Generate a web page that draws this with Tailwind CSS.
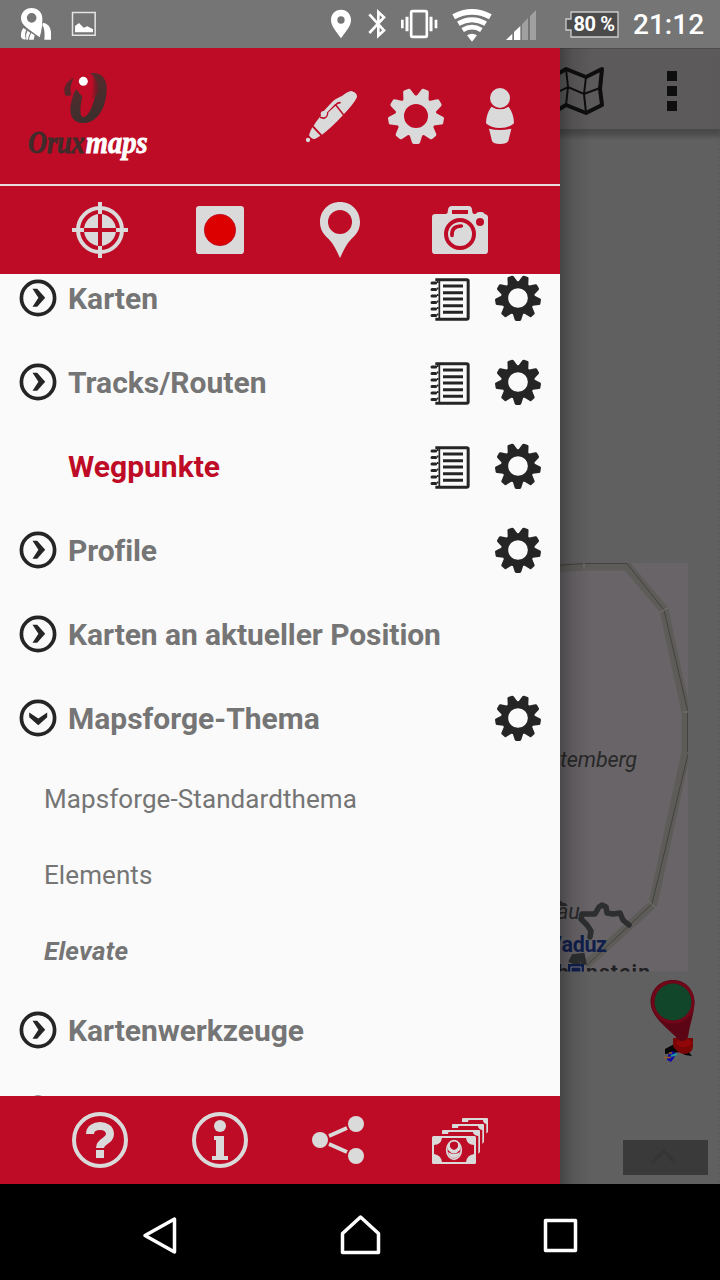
<!DOCTYPE html>
<html lang="de">
<head>
<meta charset="utf-8">
<title>OruxMaps</title>
<script src="https://cdn.jsdelivr.net/npm/@tailwindcss/browser@4"></script>
</head>
<body class="w-[720px] h-[1280px] overflow-hidden flex flex-col bg-black font-['Roboto',sans-serif]">

<!-- shared icons -->
<svg class="hidden">
  <defs>
    <path id="tooth" d="M-7 17 L-4 26.6 Q-3.500 28 -2.4 28 H2.4 Q3.500 28 4 26.6 L7 17Z"/>
    <symbol id="gear" viewBox="-28 -28 56 56">
      <circle r="16.2" fill="none" stroke="currentColor" stroke-width="8.4"/>
      <g fill="currentColor">
        <use href="#tooth"/><use href="#tooth" transform="rotate(40)"/><use href="#tooth" transform="rotate(80)"/>
        <use href="#tooth" transform="rotate(120)"/><use href="#tooth" transform="rotate(160)"/><use href="#tooth" transform="rotate(200)"/>
        <use href="#tooth" transform="rotate(240)"/><use href="#tooth" transform="rotate(280)"/><use href="#tooth" transform="rotate(320)"/>
      </g>
    </symbol>
    <symbol id="chev" viewBox="0 0 38 38">
      <circle cx="19" cy="19" r="16.6" fill="none" stroke="#252525" stroke-width="3.700"/>
      <path d="M13.5 9.8H18.2L26.2 18.7L18.2 27.8H13.5L19.4 18.7Z" fill="#252525"/>
    </symbol>
    <symbol id="book" viewBox="30 22 120 132">
      <path d="M46 30H140Q144.500 30 144.500 34V144Q144.500 148.500 140 148.500H46" fill="none" stroke="#252525" stroke-width="9"/>
      <path d="M58 30V149" stroke="#252525" stroke-width="5"/>
      <path d="M53 34V149" stroke="#252525" stroke-width="5" stroke-dasharray="6 13.5"/>
      <path d="M36 40H47M36 59.500H47M36 79H47M36 98.500H47M36 118H47M36 137.500H47" stroke="#252525" stroke-width="9" stroke-linecap="round"/>
      <path d="M69 49H129M69 69H129M69 88H129M69 108H129M69 127.500H129" stroke="#252525" stroke-width="9"/>
    </symbol>
  </defs>
</svg>

<!-- status bar -->
<header class="h-12 shrink-0 bg-[#757575] flex items-center text-white">
  <svg class="w-[110px] h-12" viewBox="0 0 330 144" fill="#fff">
    <path d="M95 24C76 24 63 37 63 55C63 76 84 86 119 112C126 90 127 72 127 55C127 37 113 24 95 24ZM95 39A14.500 14.500 0 1 1 95 68A14.500 14.500 0 1 1 95 39Z" fill-rule="evenodd"/>
    <path d="M70 84L79 90Q72 102 78 118Q66 120 63 110Q62 94 70 84ZM82 92L91 98Q84 108 84 119H79Q76 104 82 92ZM94 99L104 106L101 119H87Q88 107 94 99ZM129 68Q151 72 153 95V119H133Q136 88 127 76Z"/>
    <path d="M217.500 37.500H285.500V105.500H217.500Z" fill="none" stroke="#e4e4e4" stroke-width="4.500"/>
    <path d="M225 97V78L237 69L251 83L262 79L279 88V97Z"/>
  </svg>
  <svg class="ml-[210px] w-[225px] h-12" viewBox="0 0 675 144" fill="#fff">
    <path d="M63 29C45 29 33 43 33 60C33 80 52 98 63 115C74 98 93 80 93 60C93 43 81 29 63 29ZM63 49A11 11 0 1 1 63 71A11 11 0 1 1 63 49Z" fill-rule="evenodd"/>
    <path d="M148 43L192 91L175 107V36L192 52L148 99" fill="none" stroke="#fff" stroke-width="8"/>
    <rect x="273.500" y="33.500" width="47" height="77" rx="4" fill="none" stroke="#fff" stroke-width="8"/>
    <path d="M261 50V94M333 50V94" stroke="#fff" stroke-width="9"/><path d="M247 59V85M348 59V85" stroke="#fff" stroke-width="8"/>
    <g fill="none" stroke="#fff">
      <path d="M401 50Q456 21 511 50" stroke-width="17"/>
      <path d="M415 71Q456 47 497 71" stroke-width="15"/>
      <path d="M428 90Q456 73 484 90" stroke-width="14"/>
    </g>
    <path d="M441 106Q456 97 471 106L456 125Z"/>
    <path d="M558 120L577 101V120ZM582 96L601 78V120H582Z"/>
    <path d="M606 73L624 54V120H606ZM630 48L648 30V120H630Z" fill="#a0a0a0"/>
  </svg>
  <div class="ml-[20px] w-[54px] h-[27px] relative">
    <svg class="absolute inset-0 w-[54px] h-[27px]" viewBox="0 0 54 27"><path d="M6 1H53V26H6V19H1V8H6Z" fill="#4b4b4b" stroke="#ccc" stroke-width="1.300"/></svg>
    <span class="absolute left-[8.500px] top-0 leading-[27px] text-[20px] font-bold whitespace-nowrap tracking-[-0.4px]">80 %</span>
  </div>
  <span class="ml-[14px] text-[28px] font-medium leading-12 pt-0.5">21:12</span>
</header>

<main class="h-[1136px] shrink-0 flex">
  <!-- drawer -->
  <aside class="w-[560px] h-full flex flex-col bg-[#fafafa] text-[#dadada]">
    <div class="h-[138px] shrink-0 bg-[#be0b26] border-b-2 border-[#e8dcdc] flex items-center pl-6 pr-8">
      <svg class="w-[130px] h-[100px]" viewBox="72 198 390 300">
        <defs><linearGradient id="og" x1="0" y1="0" x2="0.3" y2="1"><stop offset="0" stop-color="#5c2a2c"/><stop offset="1" stop-color="#3c2f2d"/></linearGradient>
        <linearGradient id="os" x1="1" y1="0" x2="0" y2="0"><stop offset="0" stop-color="#5a2227"/><stop offset="1" stop-color="#be0b26"/></linearGradient></defs>
        <path d="M221 233Q196 246 193 268Q192 284 200 289L214 285Q206 262 221 233Z" fill="#57282b"/>
        <path d="M228 267L247 290C238 330 240 351 250 351C266 351 282 312 288 272C290 244 284 228 270 220C302 214 320 234 320 266C319 330 288 369 250 369C214 369 206 338 214 305Q219 282 228 267Z" fill="url(#og)"/>
        <path d="M278 228Q304 252 292 282L271 304Q284 262 278 228Z" fill="url(#os)"/>
        <circle cx="250" cy="244" r="13.500" fill="#fff"/>
        <g font-family="Liberation Serif" font-weight="bold" font-style="italic" font-size="97" stroke-width="2.500">
          <text x="84" y="458" textLength="170" lengthAdjust="spacingAndGlyphs" fill="#3f2c2b" stroke="#3f2c2b">Orux</text>
          <text x="257" y="458" textLength="186" lengthAdjust="spacingAndGlyphs" fill="#fff" stroke="#fff">maps</text>
        </g>
      </svg>
      <div class="ml-auto flex gap-7">
        <svg class="size-14" viewBox="42 54 168 168" fill="currentColor">
          <circle cx="54" cy="210" r="6.500"/>
          <path d="M67 172L91 197Q80 204 74 207Q64 208 57 196Q60 184 67 172Z"/>
          <path d="M71 167C80 152 88 142 95 134L130 98Q146 80 156 78Q172 64 184 63Q202 67 201 82Q190 104 160 134Q125 172 96 194Z"/>
          <path d="M138 106L161 135M152 98Q144 97 137 104L113 126Q114 139 102 145L90 142" fill="none" stroke="#be0b26" stroke-width="4.500"/>
          <path d="M101 131L123 107Q135 91 150 87" fill="none" stroke="currentColor" stroke-width="10" stroke-linecap="round"/>
          <circle cx="101" cy="132" r="9"/>
        </svg>
        <svg class="size-14"><use href="#gear"/></svg>
        <svg class="size-14" viewBox="546 54 168 168" fill="currentColor">
          <circle cx="630" cy="84" r="30"/>
          <path d="M604 110Q630 126 656 110Q672 133 672 160Q658 174 630 174Q602 174 588 160Q588 133 604 110Z"/>
          <path d="M597 176Q630 184 664 176L655 213Q650 222 630 222Q610 222 606 213Z"/>
        </svg>
      </div>
    </div>
    <div class="h-[88px] shrink-0 bg-[#be0b26] flex items-center gap-16 pl-[72px]">
      <svg class="size-14" viewBox="66 66 168 168" fill="currentColor">
        <circle cx="150" cy="150" r="66" fill="none" stroke="currentColor" stroke-width="12"/><circle cx="150" cy="150" r="48"/>
        <path d="M150 102V198M102 150H198" stroke="#be0b26" stroke-width="12"/>
        <path d="M150 66V102M150 198V234M66 150H102M198 150H234" stroke="currentColor" stroke-width="12"/>
      </svg>
      <svg class="size-14" viewBox="426 66 168 168"><rect x="438" y="78" width="144" height="144" rx="10" fill="currentColor"/><circle cx="510" cy="150" r="47" fill="#dc0000" stroke="#b8142a" stroke-width="2.500"/></svg>
      <svg class="size-14" viewBox="66 66 168 168" fill="currentColor"><path d="M150 66C116 66 90 92 90 126C90 150 101 163 116 177C133 194 140 214 150 234C160 214 167 194 184 177C199 163 210 150 210 126C210 92 184 66 150 66ZM150 90A36 36 0 1 1 150 162A36 36 0 1 1 150 90Z" fill-rule="evenodd"/></svg>
      <svg class="size-14" viewBox="426 66 168 168" fill="currentColor">
        <path d="M436 102H468Q474 100 474 90Q475 78 486 78H536Q546 79 546 90Q546 100 552 102H557Q560 96 568 96H576Q582 97 584 102Q594 104 594 112V212Q594 222 584 222H436Q426 222 426 212V112Q426 102 436 102Z"/>
        <g fill="#be0b26"><rect x="486" y="90" width="48" height="12"/><circle cx="570" cy="126" r="12"/></g>
        <circle cx="510" cy="162" r="42" fill="none" stroke="#be0b26" stroke-width="12"/>
        <path d="M486 166Q484 138 514 138" fill="none" stroke="#be0b26" stroke-width="11" stroke-linecap="round"/>
      </svg>
    </div>

    <nav class="flex-1 min-h-0 overflow-hidden text-[30px] font-bold text-[#757575]">
      <div class="-mt-[18px] h-[84px] flex items-center px-[19px]"><svg class="size-[38px] mr-[11px]"><use href="#chev"/></svg><span>Karten</span><svg class="ml-auto w-10 h-11 mr-[25px] mt-0.5"><use href="#book"/></svg><svg class="size-[46px] text-[#252525]"><use href="#gear"/></svg></div>
      <div class="h-[84px] flex items-center px-[19px]"><svg class="size-[38px] mr-[11px]"><use href="#chev"/></svg><span>Tracks/Routen</span><svg class="ml-auto w-10 h-11 mr-[25px] mt-0.5"><use href="#book"/></svg><svg class="size-[46px] text-[#252525]"><use href="#gear"/></svg></div>
      <div class="h-[84px] flex items-center pl-[68px] pr-[19px]"><span class="text-[#be0b26]">Wegpunkte</span><svg class="ml-auto w-10 h-11 mr-[25px] mt-0.5"><use href="#book"/></svg><svg class="size-[46px] text-[#252525]"><use href="#gear"/></svg></div>
      <div class="h-[84px] flex items-center px-[19px]"><svg class="size-[38px] mr-[11px]"><use href="#chev"/></svg><span class="tracking-[-0.1px]">Profile</span><svg class="ml-auto size-[46px] text-[#252525]"><use href="#gear"/></svg></div>
      <div class="h-[84px] flex items-center pl-[19px]"><svg class="size-[38px] mr-[11px]"><use href="#chev"/></svg><span class="tracking-[-0.07px]">Karten an aktueller Position</span></div>
      <div class="h-[84px] flex items-center px-[19px]"><svg class="size-[38px] mr-[11px] rotate-90"><use href="#chev"/></svg><span>Mapsforge-Thema</span><svg class="ml-auto size-[46px] text-[#252525]"><use href="#gear"/></svg></div>
      <div class="h-[76px] flex items-center pl-11 pt-0.5 text-[26px] font-normal tracking-[0.09px]">Mapsforge-Standardthema</div>
      <div class="h-[76px] flex items-center pl-11 pt-0.5 text-[26px] font-normal tracking-[0.09px]">Elements</div>
      <div class="h-[76px] flex items-center pl-11 pt-0.5 text-[26px] italic tracking-[0.25px]">Elevate</div>
      <div class="h-[84px] flex items-center pl-[19px]"><svg class="size-[38px] mr-[11px]"><use href="#chev"/></svg><span class="tracking-[-0.05px]">Kartenwerkzeuge</span></div>
      <div class="h-[84px] flex items-center pl-[19px]"><svg class="size-[38px]"><use href="#chev"/></svg></div>
    </nav>

    <div class="h-[88px] shrink-0 bg-[#be0b26] flex items-center gap-16 pl-[72px]">
      <svg class="size-14" viewBox="72 1112 56 56" fill="none" stroke="currentColor"><circle cx="100" cy="1140" r="26" stroke-width="4"/><path d="M90 1134C90 1123.500 110 1123 110 1134C110 1141.500 100 1140.500 100 1148M100 1150V1158" stroke-width="8"/></svg>
      <svg class="size-14" viewBox="192 1112 56 56" fill="currentColor"><circle cx="220" cy="1140" r="26" fill="none" stroke="currentColor" stroke-width="4"/><circle cx="220" cy="1126" r="6"/><path d="M214 1136H224V1156H228V1160H212V1156H216V1140H214Z"/></svg>
      <svg class="size-14" viewBox="312 1112 56 56" fill="currentColor"><circle cx="320" cy="1140" r="8"/><circle cx="356" cy="1124" r="8"/><circle cx="356" cy="1156" r="8"/><path d="M329 1136L347 1128M329 1144L347 1152" stroke="currentColor" stroke-width="4"/></svg>
      <svg class="size-14" viewBox="432 1112 56 56" fill="currentColor">
        <path d="M462 1122V1119Q462 1118 463 1118H487Q488 1118 488 1119V1132L486.300 1133.500V1124Q483 1123 483 1120H469Q468 1120 468 1122Z"/>
        <path d="M452 1128V1125Q452 1124 453 1124H483Q484 1124 484 1125V1142L482.300 1144V1130Q478 1129 478 1126H459Q458 1126 458 1128Z"/>
        <path d="M442 1134V1131Q442 1130 443 1130H479Q480 1130 480 1131V1152L478.300 1154V1136Q473 1135 473 1132H449Q448 1132 448 1134Z"/>
        <rect x="432" y="1136" width="44" height="28" rx="1.500"/>
        <path d="M442 1138H466Q467 1145 474 1145V1154Q467 1155 466 1162H442Q441 1155 434 1154V1145Q441 1145 442 1138Z" fill="#be0b26"/>
        <ellipse cx="454" cy="1150" rx="7.300" ry="9.300" fill="none" stroke="currentColor" stroke-width="1.700"/>
        <path d="M450 1142Q447 1146 448 1150Q454 1157 460 1150Q461 1146 458 1142V1147Q454 1153 450 1147ZM448 1152Q454 1156 460 1152Q459 1158 454 1158Q449 1158 448 1152Z"/>
      </svg>
    </div>
  </aside>

  <!-- dimmed map behind the drawer -->
  <svg class="w-40 h-[1136px] bg-[#606060]" viewBox="560 48 160 1136" font-family="Roboto">
    <defs>
      <linearGradient id="edge"><stop offset="0" stop-color="#000" stop-opacity=".28"/><stop offset=".4" stop-color="#000" stop-opacity=".1"/><stop offset="1" stop-color="#000" stop-opacity="0"/></linearGradient>
      <linearGradient id="drop" x1="0" y1="0" x2="0" y2="1"><stop offset="0" stop-color="#484848"/><stop offset=".4" stop-color="#4c4c4c"/><stop offset="1" stop-color="#606060"/></linearGradient>
      <clipPath id="tile"><rect x="560" y="563" width="128" height="408.500"/></clipPath>
    </defs>
    <rect x="560" y="48" width="160" height="81" fill="#5c5a5a"/>
    <path d="M560 48.500H720" stroke="#4c4c4c"/>
    <rect x="560" y="129" width="160" height="11" fill="url(#drop)"/>
    <g fill="none" stroke="#0e0e0e">
      <path d="M548 80L566 69L586 77L602 69L600 89L602 105L586 113L566 105L548 116" stroke-width="4" stroke-linejoin="round"/>
      <path d="M566 69L568 87L566 105M586 77L584 94L586 113M556 93L568 87L584 94L600 88" stroke-width="2"/>
    </g>
    <path d="M667 71h10v10h-10zM667 86h10v10h-10zM667 101h10v10h-10z" fill="#0e0e0e"/>
    <g clip-path="url(#tile)">
      <rect x="560" y="563" width="128" height="409" fill="#686468"/>
      <path d="M550 568L584 566L627 566L664 610L686 712V752L653 904L586 965" fill="none" stroke="#5e5c58" stroke-width="9" stroke-linejoin="bevel"/>
      <path d="M550 566L584 563.500H627L664 610L688 712M687.500 712V752M688 754L652 904L586 966" fill="none" stroke="#434341"/>
      <path d="M584 562V569M660 612L668 608M683 712H688M648 901L656 908" stroke="#74726f"/>
      <text x="560" y="767" font-size="21.500" font-style="italic" fill="#292929" textLength="77">temberg</text>
      <text x="557" y="919" font-size="21.500" font-style="italic" fill="#292929">âu</text>
      <path d="M590 937L591 931L587 925L581 919L582 914H595L599 907L602 905L606 907L607 913L613 914L620 913L623 920L629 925" fill="none" stroke="#2d2e2f" stroke-width="5.500" stroke-linejoin="round" stroke-linecap="round"/>
      <path d="M571 963L574 957L582 956L584 965M577 956V964" fill="none" stroke="#2d2e2f" stroke-width="6"/>
      <text x="554" y="952" font-size="21.500" font-weight="bold" fill="#101f4c" textLength="53">/aduz</text>
      <path d="M558 899L568 906H558Z" fill="#2d2e2f"/>
      <text x="557" y="979" font-size="21" font-weight="bold" fill="#202022">h</text>
      <text x="586" y="979" font-size="21" font-weight="bold" fill="#202022" textLength="64">nstein</text>
      <path d="M569 972V965H583V972" fill="#101f4c" stroke="#101f4c" stroke-width="2"/><path d="M571 972V967H581V972" fill="none" stroke="#817f8a" stroke-width="1"/>
    </g>
    <!-- position marker -->
    <path d="M665 1049L680 1041L692 1056L685 1055L680 1052L665 1054Z" fill="#050505"/>
    <path d="M673 1038H693V1047Q692 1054 684 1054Q677 1053 673 1046Z" fill="#7a0505"/><ellipse cx="684" cy="1043" rx="8" ry="4" fill="#910606"/>
    <path d="M673 980C659 980 651 990 650.500 1002C651 1015 661 1023 675 1036Q682 1046 688 1037C690 1023 694 1015 694.500 1002C694 990 686 980 673 980Z" fill="#5c0515"/>
    <circle cx="673" cy="1002" r="20" fill="none" stroke="#710719" stroke-width="3"/><circle cx="673" cy="1002" r="18.500" fill="#12462b"/>
    <path d="M668 1055L672 1051L676 1053L674 1058L671 1062L667 1060Z" fill="#120aa0"/><path d="M664 1057.500H671M669 1053H672" stroke="#986022" stroke-width="1.500"/><path d="M671 1056L677 1054" stroke="#219a9c" stroke-width="2"/>
    <rect x="623" y="1140" width="85" height="35" fill="#3a3a3a"/>
    <path d="M652 1163L664 1151L675 1163" fill="none" stroke="#353535" stroke-width="3"/>
    <path d="M718.500 48V1184" stroke="#575757" stroke-dasharray="2 2"/>
    <rect x="560" y="48" width="32" height="1136" fill="url(#edge)"/>
  </svg>
</main>

<!-- system navigation -->
<footer class="h-24 shrink-0 bg-black">
  <svg class="w-full h-24" viewBox="0 1184 720 96" fill="none" stroke="#fff" stroke-width="3.500" stroke-linejoin="round">
    <path d="M145 1235.500L174.500 1219V1252Z"/>
    <path d="M342.500 1252.500V1233.500L360.500 1217L378.500 1233.500V1252.500Z"/>
    <path d="M545.500 1220.500H575.500V1250.500H545.500Z"/>
  </svg>
</footer>
</body>
</html>
